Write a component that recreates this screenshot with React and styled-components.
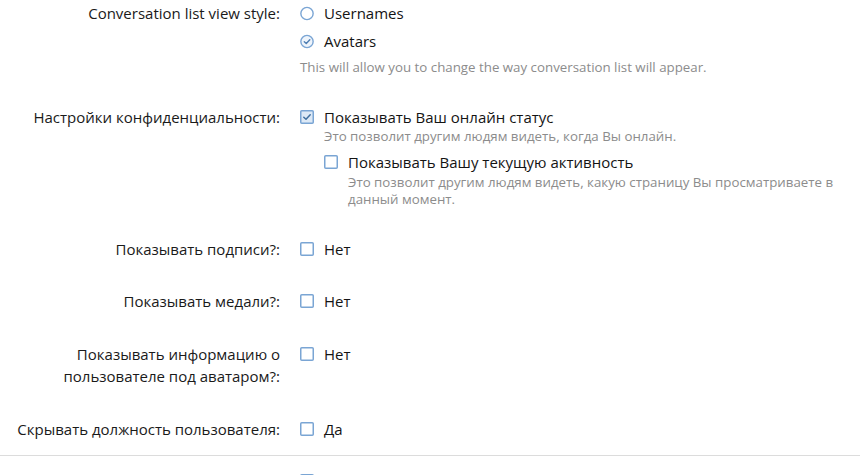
import React from 'react'
import styled, { createGlobalStyle } from 'styled-components'

const GlobalStyle = createGlobalStyle`
  html, body {
    margin: 0;
    padding: 0;
    background: #fff;
  }
  body {
    font-family: 'Open Sans', 'Noto Sans', sans-serif;
    color: #141414;
    overflow: hidden;
  }
`

const StyledForm = styled.div`
  margin-top: -13px;
  width: 860px;
`

const StyledRow = styled.dl`
  display: grid;
  grid-template-columns: 280px 1fr;
  column-gap: 20px;
  margin: 0;
  padding: ${props => (props.$separated ? '14px' : '15px')} 6px 15px 0;
  border-top: ${props => (props.$separated ? '1px solid #dcdcdc' : 'none')};
`

const StyledLabel = styled.dt`
  text-align: right;
  font-size: 15px;
  line-height: 22.5px;
  color: #1a1a1a;
`

const StyledControls = styled.dd`
  margin: 0;
  font-size: 15px;
  line-height: 22.5px;
`

const StyledChoices = styled.ul`
  list-style: none;
  margin: ${props => (props.$nested ? '6px 0 0' : '0')};
  padding: 0;
  display: flex;
  flex-direction: column;
  gap: 5.5px;
`

const StyledChoice = styled.li`
  display: grid;
  grid-template-columns: 14px 1fr;
  column-gap: 10px;
`

const StyledBox = styled.span`
  width: 14px;
  height: 14px;
  margin-top: 4px;
  display: flex;
  align-items: center;
  justify-content: center;
  svg {
    display: block;
  }
`

const StyledChoiceBody = styled.div`
  display: flex;
  flex-direction: column;
`

const StyledHint = styled.div`
  font-size: 13.3px;
  line-height: 17px;
  color: #8c8c8c;
  margin-top: ${props => props.$gap || 0}px;
`

const Radio = ({ checked }) => (
  <svg width="15" height="15" viewBox="0 0 15 15">
    <circle
      cx="7.5"
      cy="7.5"
      r="6.6"
      fill={checked ? '#eef4fb' : '#fff'}
      stroke="#7aa5d4"
      strokeWidth="1.5"
    />
    {checked && (
      <polyline
        points="4.6,7.7 6.7,9.7 10.5,5.6"
        fill="none"
        stroke="#4f7fb3"
        strokeWidth="1.5"
        strokeLinecap="round"
        strokeLinejoin="round"
      />
    )}
  </svg>
)

const Checkbox = ({ checked }) => (
  <svg width="14" height="14" viewBox="0 0 14 14">
    <rect
      x="0.75"
      y="0.75"
      width="12.5"
      height="12.5"
      rx="1"
      fill={checked ? '#dde9f6' : '#fff'}
      stroke="#7aa5d4"
      strokeWidth="1.5"
    />
    {checked && (
      <polyline
        points="3.8,7.2 6,9.2 10.2,4.8"
        fill="none"
        stroke="#3f6f9f"
        strokeWidth="1.5"
        strokeLinecap="round"
        strokeLinejoin="round"
      />
    )}
  </svg>
)

const Choice = ({ type, checked, label, hint, children }) => (
  <StyledChoice>
    <StyledBox>
      {type === 'radio' ? <Radio checked={checked} /> : <Checkbox checked={checked} />}
    </StyledBox>
    <StyledChoiceBody>
      <span>{label}</span>
      {hint && <StyledHint>{hint}</StyledHint>}
      {children}
    </StyledChoiceBody>
  </StyledChoice>
)

const yesNoRows = [
  { label: 'Показывать подписи?:', value: 'Нет' },
  { label: 'Показывать медали?:', value: 'Нет' },
  { label: 'Показывать информацию о пользователе под аватаром?:', value: 'Нет' },
  { label: 'Скрывать должность пользователя:', value: 'Да' },
]

export default function App () {
  return (
    <StyledForm>
      <GlobalStyle />
      <StyledRow>
        <StyledLabel>Conversation list view style:</StyledLabel>
        <StyledControls>
          <StyledChoices>
            <Choice type="radio" label="Usernames" />
            <Choice type="radio" checked label="Avatars" />
          </StyledChoices>
          <StyledHint $gap={6}>
            This will allow you to change the way conversation list will appear.
          </StyledHint>
        </StyledControls>
      </StyledRow>

      <StyledRow>
        <StyledLabel>Настройки конфиденциальности:</StyledLabel>
        <StyledControls>
          <StyledChoices>
            <Choice
              checked
              label="Показывать Ваш онлайн статус"
              hint="Это позволит другим людям видеть, когда Вы онлайн."
            >
              <StyledChoices $nested>
                <Choice
                  label="Показывать Вашу текущую активность"
                  hint="Это позволит другим людям видеть, какую страницу Вы просматриваете в данный момент."
                />
              </StyledChoices>
            </Choice>
          </StyledChoices>
        </StyledControls>
      </StyledRow>

      {yesNoRows.map(row => (
        <StyledRow key={row.label}>
          <StyledLabel>{row.label}</StyledLabel>
          <StyledControls>
            <StyledChoices>
              <Choice label={row.value} />
            </StyledChoices>
          </StyledControls>
        </StyledRow>
      ))}

      <StyledRow $separated>
        <StyledLabel>Использовать визуальный редактор:</StyledLabel>
        <StyledControls>
          <StyledChoices>
            <Choice label="Да" />
          </StyledChoices>
        </StyledControls>
      </StyledRow>
    </StyledForm>
  )
}
